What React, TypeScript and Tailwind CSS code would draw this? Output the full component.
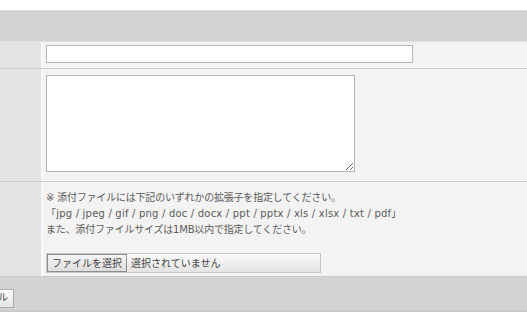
import React from 'react';

const font = { fontFamily: '"DejaVu Sans", "Noto Sans CJK JP", sans-serif' };

const FormRow: React.FC<{ children: React.ReactNode; className?: string }> = ({ children, className }) => (
  <div className="flex border-b border-[#cdcdcd]">
    <div className="w-[43px] shrink-0 bg-[#e3e3e3] border-r-2 border-[#fafafa]"></div>
    <div className={`flex-1 bg-[#f3f3f3] pl-[3px] ${className ?? ''}`}>{children}</div>
  </div>
);

const App: React.FC = () => {
  return (
    <div className="w-[527px] h-[324px] bg-white pt-[10px] text-[#555] overflow-hidden" style={font}>
      <div className="h-[32px] bg-[#d3d3d3] border-t border-[#dedede] border-b border-[#c2c2c2]"></div>

      <FormRow className="h-[26px] pt-[3px]">
        <input
          type="text"
          className="block w-[367px] h-[18px] bg-white border border-[#b5b5b5] outline-none"
        />
      </FormRow>

      <FormRow className="h-[112px] pt-[6px]">
        <textarea
          className="block w-[309px] h-[97px] bg-white border border-[#b5b5b5] outline-none resize"
        />
      </FormRow>

      <div className="flex h-[94px]">
        <div className="w-[43px] shrink-0 bg-[#e3e3e3] border-r-2 border-[#fafafa]"></div>
        <div className="flex-1 bg-[#f3f3f3] pl-[3px] pt-[8px]">
          <div className="text-[10px] leading-[16px] text-[#5a5a5a]">
            <p className="tracking-[-0.2px]">※ 添付ファイルには下記のいずれかの拡張子を指定してください。</p>
            <p className="tracking-[0.2px]">「jpg / jpeg / gif / png / doc / docx / ppt / pptx / xls / xlsx / txt / pdf」</p>
            <p className="tracking-[-0.2px]">また、添付ファイルサイズは1MB以内で指定してください。</p>
          </div>
          <div className="mt-[15px] flex items-stretch w-[275px] h-[20px] border border-[#c4c4c4] bg-gradient-to-b from-[#fafafa] to-[#e4e4e4]">
            <span className="flex items-center px-[4px] border border-[#8f8f8f] bg-gradient-to-b from-[#f6f6f6] to-[#dedede] text-[10px] text-[#444]">
              ファイルを選択
            </span>
            <span className="flex items-center pl-[4px] text-[10px] text-[#444]">選択されていません</span>
          </div>
        </div>
      </div>

      <div className="h-[36px] bg-[#d3d3d3] border-t border-[#cacaca] border-b-2 border-[#bdbdbd] pt-[7px]">
        <button className="ml-[-48px] h-[19px] px-[5px] border border-[#aaa] bg-gradient-to-b from-[#fbfbfb] to-[#e6e6e6] text-[10px] leading-none text-[#444]">
          キャンセル
        </button>
      </div>
    </div>
  );
};

export default App;
